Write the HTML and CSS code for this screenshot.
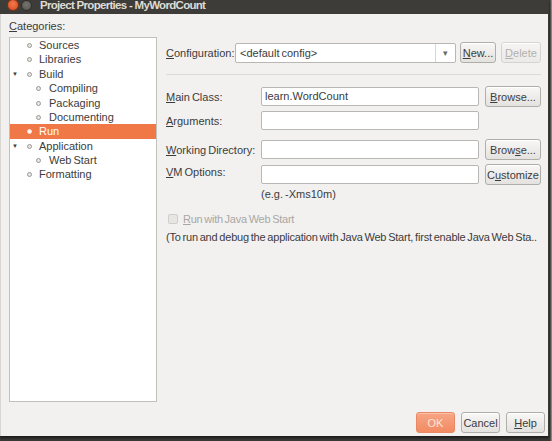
FILE: index.html
```html
<!DOCTYPE html>
<html>
<head>
<meta charset="utf-8">
<title>Project Properties - MyWordCount</title>
<link rel="stylesheet" href="styles.css">
</head>
<body>
<div class="frame">
  <div class="window">
    <div class="titlebar">
      <span class="btn-close"></span>
      <span class="btn-min"></span>
      <span class="title">Project Properties - MyWordCount</span>
    </div>
    <div class="body">
      <div class="main">
        <div class="left">
          <div class="cat-label"><u>C</u>ategories:</div>
          <div class="tree">
            <div class="row l1"><span class="bullet"></span>Sources</div>
            <div class="row l1"><span class="bullet"></span>Libraries</div>
            <div class="row l1"><span class="tri">▼</span><span class="bullet"></span>Build</div>
            <div class="row l2"><span class="bullet"></span>Compiling</div>
            <div class="row l2"><span class="bullet"></span>Packaging</div>
            <div class="row l2"><span class="bullet"></span>Documenting</div>
            <div class="row l1 sel"><span class="bullet"></span>Run</div>
            <div class="row l1"><span class="tri">▼</span><span class="bullet"></span>Application</div>
            <div class="row l2"><span class="bullet"></span>Web Start</div>
            <div class="row l1"><span class="bullet"></span>Formatting</div>
          </div>
        </div>
        <div class="right">
          <div class="config-row">
            <span class="config-label"><u>C</u>onfiguration:</span>
            <div class="combo"><span class="combo-text">&lt;default config&gt;</span><span class="combo-arrow">▾</span></div>
            <button class="btn btn-new"><u>N</u>ew...</button>
            <button class="btn btn-delete" disabled><u>D</u>elete</button>
          </div>
          <div class="sep"></div>
          <div class="form">
            <div class="frow r-main">
              <span class="flabel"><u>M</u>ain Class:</span>
              <div class="input">learn.WordCount</div>
              <button class="btn btn-side"><u>B</u>rowse...</button>
            </div>
            <div class="frow r-args">
              <span class="flabel"><u>A</u>rguments:</span>
              <div class="input"></div>
            </div>
            <div class="frow r-wd">
              <span class="flabel"><u>W</u>orking Directory:</span>
              <div class="input"></div>
              <button class="btn btn-side">Brow<u>s</u>e...</button>
            </div>
            <div class="frow r-vm">
              <span class="flabel top"><u>V</u>M Options:</span>
              <div class="input"></div>
              <button class="btn btn-side">C<u>u</u>stomize</button>
            </div>
            <div class="hint">(e.g. -Xms10m)</div>
          </div>
          <div class="check-row">
            <span class="checkbox"></span>
            <span class="check-label"><u>R</u>un with Java Web Start</span>
          </div>
          <div class="note">(To run and debug the application with Java Web Start, first enable Java Web Sta..</div>
        </div>
      </div>
      <div class="footer">
        <button class="btn btn-ok">OK</button>
        <button class="btn btn-foot">Cancel</button>
        <button class="btn btn-foot"><u>H</u>elp</button>
      </div>
    </div>
  </div>
</div>
</body>
</html>
```

FILE: styles.css
```css
* { box-sizing: border-box; }
html, body { margin: 0; padding: 0; }
body {
  width: 552px;
  height: 441px;
  background: #6f6e6a;
  font-family: "Liberation Sans", Arial, sans-serif;
  font-size: 11px;
  word-spacing: -1px;
  color: #3c3c3c;
  overflow: hidden;
}
u { text-decoration: underline; text-underline-offset: 1px; }

.frame {
  width: 552px;
  height: 441px;
  background: linear-gradient(to right, #3a3936 0, #3a3936 550px, #6d6c68 551px, #a09f9b 552px);
  padding-right: 3px;
  padding-bottom: 5px;
}
.window {
  width: 549px;
  height: 436px;
  display: flex;
  flex-direction: column;
  border-right: 1px solid #3b3a36;
  box-shadow: 0 2px 2px rgba(0,0,0,0.5);
}
.titlebar {
  height: 14px;
  background: #3d3c38;
  position: relative;
  display: flex;
  align-items: flex-start;
  flex: none;
}
.btn-close {
  position: absolute;
  left: 7px;
  top: -1px;
  width: 12px;
  height: 12px;
  border-radius: 50%;
  background: radial-gradient(circle at 50% 40%, #f07a4c, #d9471c);
  border: 1px solid #7a3018;
}
.btn-min {
  position: absolute;
  left: 21px;
  top: 0px;
  width: 11px;
  height: 11px;
  border-radius: 50%;
  background: radial-gradient(circle at 50% 40%, #75736d, #55534e);
  border: 1px solid #2e2d2a;
}
.title {
  margin-left: 40px;
  margin-top: -2px;
  font-weight: bold;
  font-size: 11.5px;
  letter-spacing: -0.7px;
  word-spacing: 0;
  line-height: 14px;
  color: #dfdbd2;
}
.body {
  flex: 1;
  min-height: 0;
  background: #f2f1f0;
  border-left: 1px solid #d8d6d2;
  display: flex;
  flex-direction: column;
}
.main {
  flex: 1;
  min-height: 0;
  display: flex;
}
.left {
  width: 157px;
  padding-left: 8px;
  display: flex;
  flex-direction: column;
  flex: none;
}
.cat-label {
  height: 23px;
  line-height: 14px;
  padding-top: 5px;
}
.tree {
  width: 148px;
  height: 366px;
  background: #fff;
  border: 1px solid #c2c0bc;
}
.row {
  height: 14.4px;
  line-height: 14.4px;
  position: relative;
  color: #3c3c3c;
  white-space: nowrap;
}
.row.l1 { padding-left: 29px; }
.row.l2 { padding-left: 39px; }
.row .bullet {
  position: absolute;
  top: 5px;
  width: 5px;
  height: 5px;
  border-radius: 50%;
  border: 1px solid #9a9994;
  background: #e8e7e4;
}
.row.l1 .bullet { left: 17px; }
.row.l2 .bullet { left: 26px; }
.row .tri {
  position: absolute;
  left: 2px;
  top: 0;
  font-size: 6px;
  color: #3c3c3c;
}
.row.sel {
  background: #f07746;
  color: #fff;
}
.row.sel .bullet { border-color: #fde0d2; background: #fff; }

.right {
  flex: 1;
  min-width: 0;
  overflow: hidden;
  padding-left: 8px;
  padding-right: 7px;
  padding-top: 28px;
  display: flex;
  flex-direction: column;
}
.config-row {
  display: flex;
  align-items: center;
  height: 21px;
}
.config-label { width: 69px; flex: none; }
.combo {
  width: 221px;
  height: 20px;
  background: #fff;
  border: 1px solid #b9b7b3;
  border-radius: 2px;
  display: flex;
  align-items: center;
  padding-left: 4px;
}
.combo-text { flex: 1; }
.combo-arrow {
  width: 20px;
  height: 18px;
  border-left: 1px solid #dad8d4;
  text-align: center;
  line-height: 18px;
  font-size: 9px;
  color: #6a6966;
}
.btn {
  font-family: inherit;
  font-size: 11px;
  word-spacing: -1px;
  color: #3c3c3c;
  height: 21px;
  padding: 0;
  border: 1px solid #b0aea9;
  border-radius: 3px;
  background: linear-gradient(#f8f7f6, #e4e2df);
  box-shadow: inset 0 1px 0 #fff;
  flex: none;
}
.btn-new { width: 36px; margin-left: 4px; }
.btn-delete {
  width: 40px;
  margin-left: 5px;
  color: #b3b1ac;
  border-color: #d6d4d0;
  background: linear-gradient(#f5f4f3, #eceae8);
}
.sep {
  height: 1px;
  background: #dcdad6;
  margin-top: 11px;
  margin-bottom: 11px;
}
.form {
  display: flex;
  flex-direction: column;
}
.frow {
  display: flex;
  align-items: center;
  height: 21px;
}
.r-args { margin-top: 3px; }
.r-wd { margin-top: 8px; }
.r-vm { margin-top: 4px; align-items: flex-start; }
.flabel { width: 95px; flex: none; }
.flabel.top { padding-top: 2px; }
.input {
  width: 218px;
  height: 19px;
  flex: none;
  background: #fff;
  border: 1px solid #b9b7b3;
  border-radius: 2px;
  padding-left: 3px;
  line-height: 17px;
}
.r-vm .input { margin-top: 1px; }
.btn-side { width: 56px; margin-left: 6px; }
.hint {
  margin-left: 95px;
  margin-top: 2px;
  line-height: 14px;
}
.check-row {
  display: flex;
  align-items: center;
  margin-top: 11px;
  height: 14px;
  color: #a9a7a2;
}
.checkbox {
  width: 10px;
  height: 10px;
  margin-left: 2px;
  margin-right: 5px;
  border: 1px solid #d0cecb;
  border-radius: 2px;
  background: #e7e6e3;
}
.check-label { letter-spacing: -0.25px; }
.note {
  margin-top: 4px;
  white-space: nowrap;
  line-height: 14px;
  letter-spacing: -0.2px;
}
.footer {
  height: 34px;
  flex: none;
  display: flex;
  justify-content: flex-end;
  align-items: flex-end;
  padding-right: 3px;
  padding-bottom: 3px;
  gap: 6px;
}
.btn-foot { width: 39px; height: 21px; }
.btn-ok {
  width: 39px;
  height: 21px;
  color: #fbe6dc;
  border-color: #e88864;
  background: linear-gradient(#f7a585, #f28b63);
  box-shadow: inset 0 1px 0 #fbc0a8;
}
```
